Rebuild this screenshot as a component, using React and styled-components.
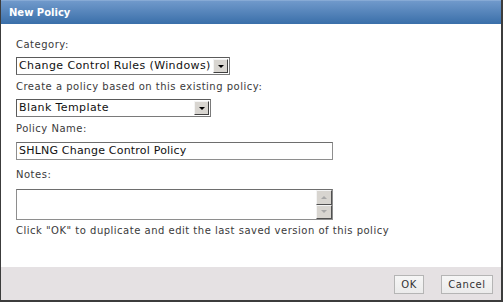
import React from 'react';
import styled, { createGlobalStyle } from 'styled-components';

const GlobalStyle = createGlobalStyle`
  html, body {
    margin: 0;
    padding: 0;
    background: #ffffff;
  }
  * { box-sizing: border-box; }
`;

const Dialog = styled.div`
  width: 503px;
  height: 302px;
  display: flex;
  flex-direction: column;
  border-left: 1px solid #3c3c3c;
  border-right: 2px solid #3c3c3c;
  border-bottom: 2px solid #3c3c3c;
  font-family: "DejaVu Sans", Verdana, sans-serif;
  font-size: 10px;
  color: #3a3a3a;
  background: #fff;
`;

const TitleBar = styled.div`
  height: 24px;
  flex: none;
  display: flex;
  align-items: center;
  padding-left: 8px;
  background: linear-gradient(to bottom, #9dbbdf 0px, #7099cb 1px, #3a6fa9 100%);
  color: #fff;
  font-weight: bold;
  font-size: 10px;
`;

const Body = styled.div`
  flex: 1;
  display: flex;
  flex-direction: column;
  align-items: flex-start;
  padding: 14px 15px 0;
`;

const Label = styled.div`
  height: 14px;
  line-height: 14px;
  margin-bottom: ${p => p.$after || 5}px;
  white-space: nowrap;
  letter-spacing: 0.5px;
`;

const SelectBox = styled.div`
  width: ${p => p.$width}px;
  height: 18px;
  display: flex;
  align-items: stretch;
  border: 1px solid #7a7a7a;
  border-top-color: #5a5a5a;
  border-left-color: #5a5a5a;
  background: #fff;
  margin-bottom: 5px;
`;

const SelectText = styled.div`
  flex: 1;
  padding-left: 2px;
  line-height: 16px;
  font-size: 11px;
  letter-spacing: 0.4px;
  color: #111;
  white-space: nowrap;
  overflow: hidden;
`;

const ArrowButton = styled.div`
  width: 15px;
  margin: 1px;
  display: flex;
  align-items: center;
  justify-content: center;
  background: #d8d5d0;
  border: 1px solid;
  border-color: #f4f4f4 #404040 #404040 #f4f4f4;
`;

const Down = styled.span`
  width: 0;
  height: 0;
  border-left: 3px solid transparent;
  border-right: 3px solid transparent;
  border-top: 3px solid ${p => p.$color || '#000'};
`;

const Up = styled.span`
  width: 0;
  height: 0;
  border-left: 3px solid transparent;
  border-right: 3px solid transparent;
  border-bottom: 3px solid ${p => p.$color || '#000'};
`;

const TextInput = styled.div`
  width: 317px;
  height: 18px;
  border: 1px solid #8e8e8e;
  border-top-color: #6e6e6e;
  padding-left: 2px;
  line-height: 16px;
  font-size: 11px;
  letter-spacing: 0.2px;
  color: #111;
  margin-bottom: 8px;
`;

const NotesArea = styled.div`
  width: 317px;
  height: 31px;
  display: flex;
  justify-content: flex-end;
  border: 1px solid #8e8e8e;
  border-top-color: #6e6e6e;
  margin-bottom: 4px;
`;

const ScrollBar = styled.div`
  width: 16px;
  display: flex;
  flex-direction: column;
`;

const ScrollButton = styled.div`
  flex: 1;
  display: flex;
  align-items: center;
  justify-content: center;
  background: #d8d5d0;
  border: 1px solid;
  border-color: #f4f4f4 #505050 #505050 #f4f4f4;
`;

const Footer = styled.div`
  height: 33px;
  flex: none;
  display: flex;
  justify-content: flex-end;
  align-items: flex-start;
  gap: 17px;
  padding: 8px 8px 0 0;
  background: #e5e1e3;
`;

const Button = styled.button`
  height: 19px;
  width: ${p => p.$width}px;
  padding: 0;
  font-family: "DejaVu Sans", Verdana, sans-serif;
  font-size: 10px;
  color: #333;
  background: linear-gradient(to bottom, #f6f6f6, #ebebeb);
  border: 1px solid #b5b5b5;
  border-radius: 0;
  letter-spacing: 0.6px;
`;

export default function App() {
  return (
    <>
      <GlobalStyle />
      <Dialog>
        <TitleBar>New Policy</TitleBar>
        <Body>
          <Label>Category:</Label>
          <SelectBox $width={214}>
            <SelectText>Change Control Rules (Windows)</SelectText>
            <ArrowButton><Down /></ArrowButton>
          </SelectBox>
          <Label>Create a policy based on this existing policy:</Label>
          <SelectBox $width={195}>
            <SelectText>Blank Template</SelectText>
            <ArrowButton><Down /></ArrowButton>
          </SelectBox>
          <Label $after={6}>Policy Name:</Label>
          <TextInput>SHLNG Change Control Policy</TextInput>
          <Label $after={7}>Notes:</Label>
          <NotesArea>
            <ScrollBar>
              <ScrollButton><Up $color="#a8a8a8" /></ScrollButton>
              <ScrollButton><Down $color="#a8a8a8" /></ScrollButton>
            </ScrollBar>
          </NotesArea>
          <Label>Click "OK" to duplicate and edit the last saved version of this policy</Label>
        </Body>
        <Footer>
          <Button $width={30}>OK</Button>
          <Button $width={52}>Cancel</Button>
        </Footer>
      </Dialog>
    </>
  );
}
